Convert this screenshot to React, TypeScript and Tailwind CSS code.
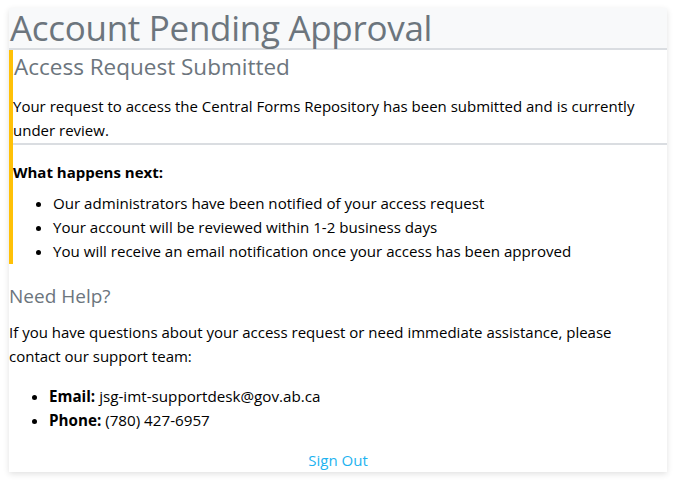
export default function App() {
  const font = { fontFamily: '"Open Sans", "Noto Sans", sans-serif' };
  return (
    <div className="w-[675px] h-[483px] bg-white pt-[8px] pl-[9px] pr-[8px]" style={font}>
      <div className="bg-white shadow-[0_2px_6px_rgba(0,0,0,0.12)]">
        <div className="bg-[#f8f9fa] border-b-2 border-[#dadde1] h-[42px] pl-[1px]">
          <h1 className="text-[35px] leading-[40px] text-[#6c757d] tracking-[-0.3px]">Account Pending Approval</h1>
        </div>
        <div className="border-l-4 border-[#ffc107] pb-[1px]">
          <h4 className="text-[22.5px] leading-[34px] text-[#6c757d] pl-[1px]">Access Request Submitted</h4>
          <p className="text-[15px] leading-[24px] text-black mt-[10px] pr-[8px]">
            Your request to access the Central Forms Repository has been submitted and is currently under review.
          </p>
          <div className="border-t-2 border-[#dadde1] mt-[1px]" />
          <p className="text-[15px] leading-[24px] font-bold text-black mt-[15px]">What happens next:</p>
          <ul className="list-disc pl-[40px] mt-[7px] text-[15.1px] leading-[24px] text-black">
            <li>Our administrators have been notified of your access request</li>
            <li>Your account will be reviewed within 1-2 business days</li>
            <li>You will receive an email notification once your access has been approved</li>
          </ul>
        </div>
        <h5 className="text-[19px] leading-[24px] text-[#6c757d] mt-[20px]">Need Help?</h5>
        <p className="text-[15px] leading-[24px] text-black mt-[12px]">
          If you have questions about your access request or need immediate assistance, please contact our support team:
        </p>
        <ul className="list-disc pl-[40px] mt-[16px] text-[15.2px] leading-[24px] text-black">
          <li><strong>Email:</strong> jsg-imt-supportdesk@gov.ab.ca</li>
          <li><strong>Phone:</strong> (780) 427-6957</li>
        </ul>
        <div className="text-center mt-[16px] pb-[0px]">
          <a className="text-[15px] leading-[24px] text-[#1eb3f0] cursor-pointer">Sign Out</a>
        </div>
      </div>
    </div>
  );
}
